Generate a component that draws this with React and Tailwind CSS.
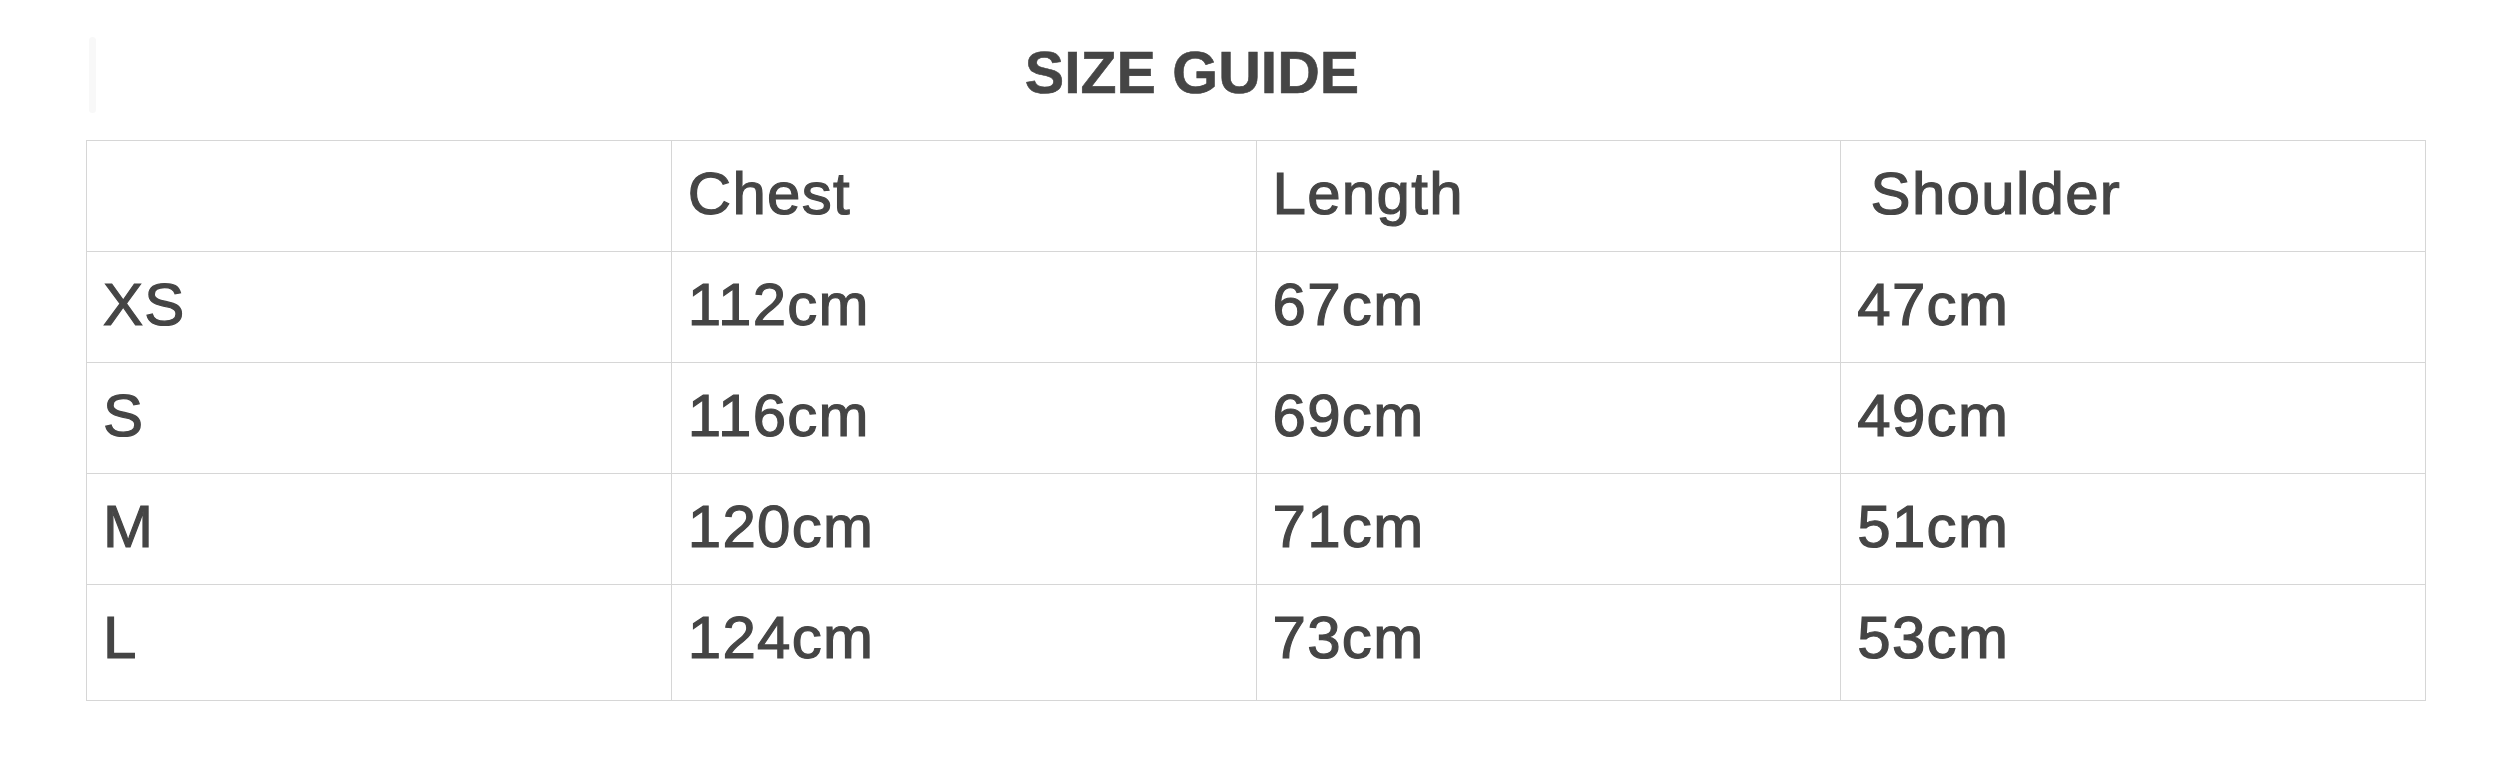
const columns = ["", "Chest", "Length", "\u2009Shoulder"];

const rows = [
  ["XS", "112cm", "67cm", "47cm"],
  ["S", "116cm", "69cm", "49cm"],
  ["M", "120cm", "71cm", "51cm"],
  ["L", "124cm", "73cm", "53cm"],
];

export default function App() {
  return (
    <div
      className="min-h-[770px] w-[2515px] bg-white text-[#454545]"
      style={{ fontFamily: '"Liberation Sans", Arial, Helvetica, sans-serif' }}
    >
      {/* Title bar */}
      <div className="relative ml-[86px] w-[2340px]">
        <div className="absolute left-[3px] top-[37px] h-[76px] w-[7px] rounded-full bg-[#f8f8f8]" />
        <h1 className="pt-[44px] pb-[37px] pr-[128px] text-center text-[59px] font-bold leading-none [-webkit-text-stroke:0.6px_#454545]">
          SIZE GUIDE
        </h1>
      </div>

      {/* Table */}
      <table className="ml-[86px] w-[2340px] table-fixed border-collapse text-[60px] leading-none tracking-[1.3px] [-webkit-text-stroke:1.2px_#454545]">
        <thead>
          <tr>
            {columns.map((c, i) => (
              <th
                key={i}
                className="border border-[#d6d6d6] px-[16px] pt-[23px] pb-[27px] text-left font-normal whitespace-pre"
              >
                {c || "\u00a0"}
              </th>
            ))}
          </tr>
        </thead>
        <tbody>
          {rows.map((row, r) => (
            <tr key={r}>
              {row.map((cell, i) => (
                <td
                  key={i}
                  className={
                    "border border-[#d6d6d6] px-[16px] pt-[23px] text-left " +
                    (r === rows.length - 1 ? "pb-[32px]" : "pb-[27px]")
                  }
                >
                  {cell}
                </td>
              ))}
            </tr>
          ))}
        </tbody>
      </table>
    </div>
  );
}
